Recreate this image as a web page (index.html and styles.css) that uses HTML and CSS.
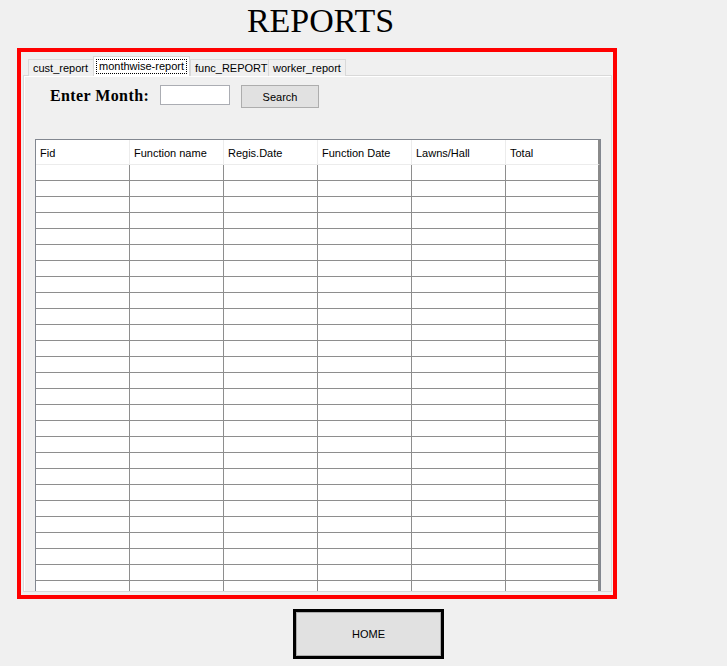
FILE: index.html
```html
<!DOCTYPE html>
<html>
<head>
<meta charset="utf-8">
<link rel="stylesheet" href="styles.css">
</head>
<body>
<div class="page">
  <h1 class="title">REPORTS</h1>
  <div class="frame">
    <div class="tabs">
      <div class="tab">cust_report</div>
      <div class="tab tab-active"><span class="focus">monthwise-report</span></div>
      <div class="tab">func_REPORT</div>
      <div class="tab">worker_report</div>
    </div>
    <div class="pane">
      <div class="search-row">
        <label class="label">Enter Month:</label>
        <div class="input"></div>
        <div class="btn search-btn">Search</div>
      </div>
      <div class="grid-wrap">
        <table class="grid">
          <thead>
            <tr><th>Fid</th><th>Function name</th><th>Regis.Date</th><th>Function Date</th><th>Lawns/Hall</th><th>Total</th></tr>
          </thead>
          <tbody>
            <tr><td></td><td></td><td></td><td></td><td></td><td></td></tr>
            <tr><td></td><td></td><td></td><td></td><td></td><td></td></tr>
            <tr><td></td><td></td><td></td><td></td><td></td><td></td></tr>
            <tr><td></td><td></td><td></td><td></td><td></td><td></td></tr>
            <tr><td></td><td></td><td></td><td></td><td></td><td></td></tr>
            <tr><td></td><td></td><td></td><td></td><td></td><td></td></tr>
            <tr><td></td><td></td><td></td><td></td><td></td><td></td></tr>
            <tr><td></td><td></td><td></td><td></td><td></td><td></td></tr>
            <tr><td></td><td></td><td></td><td></td><td></td><td></td></tr>
            <tr><td></td><td></td><td></td><td></td><td></td><td></td></tr>
            <tr><td></td><td></td><td></td><td></td><td></td><td></td></tr>
            <tr><td></td><td></td><td></td><td></td><td></td><td></td></tr>
            <tr><td></td><td></td><td></td><td></td><td></td><td></td></tr>
            <tr><td></td><td></td><td></td><td></td><td></td><td></td></tr>
            <tr><td></td><td></td><td></td><td></td><td></td><td></td></tr>
            <tr><td></td><td></td><td></td><td></td><td></td><td></td></tr>
            <tr><td></td><td></td><td></td><td></td><td></td><td></td></tr>
            <tr><td></td><td></td><td></td><td></td><td></td><td></td></tr>
            <tr><td></td><td></td><td></td><td></td><td></td><td></td></tr>
            <tr><td></td><td></td><td></td><td></td><td></td><td></td></tr>
            <tr><td></td><td></td><td></td><td></td><td></td><td></td></tr>
            <tr><td></td><td></td><td></td><td></td><td></td><td></td></tr>
            <tr><td></td><td></td><td></td><td></td><td></td><td></td></tr>
            <tr><td></td><td></td><td></td><td></td><td></td><td></td></tr>
            <tr><td></td><td></td><td></td><td></td><td></td><td></td></tr>
            <tr><td></td><td></td><td></td><td></td><td></td><td></td></tr>
            <tr><td></td><td></td><td></td><td></td><td></td><td></td></tr>
            <tr><td></td><td></td><td></td><td></td><td></td><td></td></tr>
          </tbody>
        </table>
      </div>
    </div>
  </div>
  <div class="home-wrap">
    <div class="btn home-btn">HOME</div>
  </div>
</div>
</body>
</html>
```
FILE: styles.css
```css
html, body {
  margin: 0;
  padding: 0;
  background: #f0f0f0;
}
body {
  width: 727px;
  height: 666px;
  overflow: hidden;
  font-family: "Liberation Sans", Arial, sans-serif;
  font-size: 11px;
  color: #000;
}
.page {
  display: flex;
  flex-direction: column;
}
.title {
  margin: 0;
  height: 48px;
  width: 600px;
  margin-left: 17px;
  padding-left: 7px;
  box-sizing: border-box;
  text-align: center;
  font-family: "Liberation Serif", "Times New Roman", serif;
  font-weight: normal;
  font-size: 34px;
  line-height: 42px;
  color: #000;
}
.frame {
  margin-left: 17px;
  width: 600px;
  height: 551px;
  box-sizing: border-box;
  border: 4px solid #ff0000;
  padding: 4px 1px 3px 2px;
  display: flex;
  flex-direction: column;
  overflow: hidden;
}
.tabs {
  display: flex;
  align-items: flex-end;
  padding-left: 5px;
  height: 20px;
  position: relative;
  z-index: 1;
}
.tab {
  height: 17px;
  box-sizing: border-box;
  border: 1px solid #d9d9d9;
  border-bottom: none;
  background: #f0f0f0;
  padding: 0 4px;
  line-height: 16px;
  white-space: nowrap;
  margin-right: -1px;
}
.tab:nth-child(1) { width: 66px; }
.tab:nth-child(3) { width: 79px; margin-left: 1px; }
.tab:nth-child(4) { width: 78px; }
.tab-active {
  height: 20px;
  width: 97px;
  background: #ffffff;
  margin: 0 -1px 0 0;
  padding: 2px 2px 0;
  line-height: 14px;
}
.focus {
  display: block;
  border: 1px dotted #000;
  padding: 0 2px;
  height: 15px;
  box-sizing: border-box;
  line-height: 12px;
}
.pane {
  flex: 1;
  border: 1px solid #d9d9d9;
  box-shadow: inset 1px 1px 0 #ffffff;
  background: #f0f0f0;
  margin-top: -1px;
  display: flex;
  flex-direction: column;
  min-height: 0;
}
.search-row {
  display: flex;
  align-items: flex-start;
  height: 63px;
  padding-top: 9px;
  box-sizing: border-box;
  flex-shrink: 0;
}
.label {
  margin-left: 26px;
  width: 110px;
  font-family: "Liberation Serif", "Times New Roman", serif;
  font-weight: bold;
  font-size: 16px;
  letter-spacing: 0.4px;
  line-height: 22px;
}
.input {
  width: 70px;
  height: 20px;
  box-sizing: border-box;
  background: #fff;
  border: 1px solid #abadb3;
}
.btn {
  box-sizing: border-box;
  background: #e1e1e1;
  border: 1px solid #adadad;
  display: flex;
  align-items: center;
  justify-content: center;
  font-size: 11px;
}
.search-btn {
  margin-left: 11px;
  width: 78px;
  height: 23px;
}
.grid-wrap {
  margin-left: 11px;
  width: 566px;
  flex: 1;
  min-height: 0;
  box-sizing: border-box;
  border: 1px solid #828790;
  border-bottom: none;
  background: #ffffff;
  overflow: hidden;
}
.grid {
  border-collapse: separate;
  border-spacing: 0;
  table-layout: fixed;
  width: 564px;
}
.grid th, .grid td {
  width: 94px;
  box-sizing: border-box;
  padding: 0;
}
.grid th {
  height: 25px;
  text-align: left;
  font-weight: normal;
  padding-left: 4px;
  padding-top: 2px;
  border-right: 1px solid #ececec;
  border-bottom: 1px solid #ececec;
  color: #000;
}
.grid td {
  height: 16px;
  border-right: 1px solid #8e8e8e;
  border-bottom: 1px solid #8e8e8e;
}
.grid tr > :last-child {
  border-right: 2px solid #8a8a8a;
}
.home-wrap {
  margin-top: 10px;
  margin-left: 293px;
}
.home-btn {
  width: 151px;
  height: 50px;
  border: 3px solid #000;
  box-shadow: inset 0 0 0 1px #adadad;
  background: #e1e1e1;
}
```
